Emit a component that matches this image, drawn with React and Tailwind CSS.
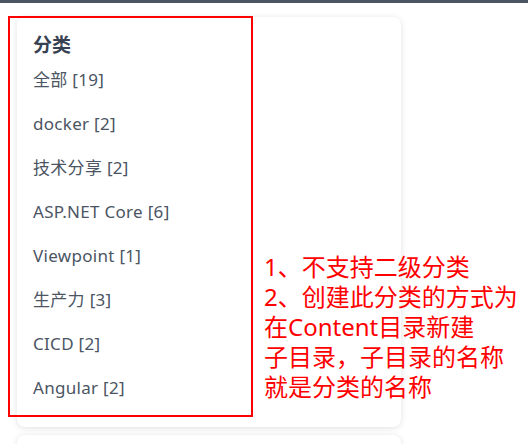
import React from 'react';

const CATEGORIES = [
  { name: '全部', count: 19 },
  { name: 'docker', count: 2 },
  { name: '技术分享', count: 2 },
  { name: 'ASP.NET Core', count: 6 },
  { name: 'Viewpoint', count: 1 },
  { name: '生产力', count: 3 },
  { name: 'CICD', count: 2 },
  { name: 'Angular', count: 2 },
];

const NOTE = [
  '1、不支持二级分类',
  '2、创建此分类的方式为',
  '在Content目录新建',
  '子目录，子目录的名称',
  '就是分类的名称',
];

export default function App() {
  return (
    <div className="relative w-[528px] h-[444px] bg-white overflow-hidden font-['Noto_Sans','Noto_Sans_CJK_SC',sans-serif]">
      <div className="h-[3px] bg-[#4b5563]" />

      <div className="flex flex-col gap-[8px] pl-[17px] pt-[14px]">
        {/* category card */}
        <div className="w-[384px] h-[410px] bg-white rounded-lg shadow-[0_1px_6px_rgba(0,0,0,0.12)] px-4 pt-[15px] pb-[17px]">
          <h3 className="text-[19px] leading-[26px] font-bold text-[#374151]">分类</h3>
          <ul className="flex flex-col">
            {CATEGORIES.map(c => (
              <li key={c.name} className="text-[17px] leading-[24px] py-[10px] text-[#4b5563] tracking-[0.3px]">
                {c.name} [{c.count}]
              </li>
            ))}
          </ul>
        </div>
        {/* next card peeks out */}
        <div className="w-[384px] h-[40px] bg-white rounded-lg shadow-[0_1px_6px_rgba(0,0,0,0.12)]" />
      </div>

      {/* annotation */}
      <div className="absolute left-[8px] top-[16px] w-[245px] h-[401px] border-2 border-[#ff0000]" />
      <div className="absolute left-[264px] top-[252px] text-[#ff0000] text-[24px] leading-[30px]">
        {NOTE.map(line => (
          <div key={line} className="whitespace-nowrap">{line}</div>
        ))}
      </div>
    </div>
  );
}
